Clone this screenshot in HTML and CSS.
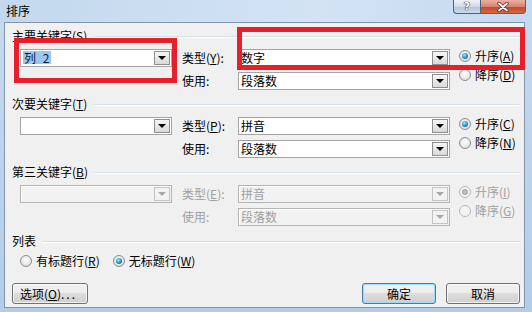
FILE: index.html
```html
<!DOCTYPE html>
<html lang="zh-CN">
<head>
    <meta charset="UTF-8">
    <title>排序</title>
<link rel="stylesheet" href="styles.css">
</head>
<body>

    <div class="window">
        <div class="titlebar">
            <span class="title">排序</span>
            <div class="capBtns">
                <span class="cap help">?</span>
                <span class="cap close">
                    <svg width="14" height="10" viewBox="0 0 14 10">
                        <path d="M3 1.5 L11 8.5 M11 1.5 L3 8.5" stroke="#5a2a22" stroke-width="3.4" stroke-linecap="round"/>
                        <path d="M3 1.5 L11 8.5 M11 1.5 L3 8.5" stroke="#fff" stroke-width="1.8" stroke-linecap="round"/>
                    </svg>
                </span>
            </div>
        </div>

        <div class="client">
            <div class="group first">
                <div class="groupHead"><span>主要关键字(<u>S</u>)</span></div>
                <div class="keys">
                    <div class="combo key"><span class="val"><span class="sel">列 2</span></span><span class="drop"></span></div>
                    <span class="lbl type">类型(<u>Y</u>):</span>
                    <div class="combo kind"><span class="val">数字</span><span class="drop"></span></div>
                    <div class="orders">
                        <span class="radio on"><i></i>升序(<u>A</u>)</span>
                        <span class="radio"><i></i>降序(<u>D</u>)</span>
                    </div>
                    <span class="lbl use">使用:</span>
                    <div class="combo field"><span class="val">段落数</span><span class="drop"></span></div>
                </div>
            </div>

            <div class="group">
                <div class="groupHead"><span>次要关键字(<u>T</u>)</span></div>
                <div class="keys">
                    <div class="combo key"><span class="val"></span><span class="drop"></span></div>
                    <span class="lbl type">类型(<u>P</u>):</span>
                    <div class="combo kind"><span class="val">拼音</span><span class="drop"></span></div>
                    <div class="orders">
                        <span class="radio on"><i></i>升序(<u>C</u>)</span>
                        <span class="radio"><i></i>降序(<u>N</u>)</span>
                    </div>
                    <span class="lbl use">使用:</span>
                    <div class="combo field"><span class="val">段落数</span><span class="drop"></span></div>
                </div>
            </div>

            <div class="group">
                <div class="groupHead"><span>第三关键字(<u>B</u>)</span></div>
                <div class="keys off">
                    <div class="combo key"><span class="val"></span><span class="drop"></span></div>
                    <span class="lbl type">类型(<u>E</u>):</span>
                    <div class="combo kind"><span class="val">拼音</span><span class="drop"></span></div>
                    <div class="orders">
                        <span class="radio on"><i></i>升序(<u>I</u>)</span>
                        <span class="radio"><i></i>降序(<u>G</u>)</span>
                    </div>
                    <span class="lbl use">使用:</span>
                    <div class="combo field"><span class="val">段落数</span><span class="drop"></span></div>
                </div>
            </div>

            <div class="group list">
                <div class="groupHead"><span>列表</span></div>
                <div class="listRow">
                    <span class="radio"><i></i>有标题行(<u>R</u>)</span>
                    <span class="radio on"><i></i>无标题行(<u>W</u>)</span>
                </div>
            </div>

            <div class="btnRow">
                <span class="btn opts">选项(<u>O</u>)<span class="dots">...</span></span>
                <span class="btn ok">确定</span>
                <span class="btn">取消</span>
            </div>
        </div>

        <div class="mark mark1"></div>
        <div class="mark mark2"></div>
    </div>

</body>
</html>
```

FILE: styles.css
```css
body{
    margin: 0;
    font-family: "Noto Sans CJK SC", "Noto Sans", sans-serif;
    font-size: 12px;
    color: #000;
}
.window{
    position: relative;
    width: 532px;
    height: 312px;
    display: flex;
    flex-direction: column;
    overflow: hidden;
    background: linear-gradient(#c6daef, #b3cce7);
}
.titlebar{
    flex: none;
    height: 22px;
    display: flex;
    align-items: flex-start;
    background: linear-gradient(90deg, #c3d8ee, #d3e3f4 60%, #c4d9ef);
}
.title{
    padding: 4px 0 0 6px;
    line-height: 14px;
}
.capBtns{
    margin-left: auto;
    margin-right: 6px;
    display: flex;
}
.cap{
    height: 14px;
    box-sizing: border-box;
    border: 1px solid #50627a;
    border-top: none;
    display: flex;
    align-items: center;
    justify-content: center;
}
.help{
    width: 27px;
    border-right: none;
    border-radius: 0 0 0 4px;
    background: linear-gradient(#eef3f9, #cfdbe8 50%, #b3c4d8 51%, #cbdbec);
    color: #fff;
    font-family: "DejaVu Sans", sans-serif;
    font-weight: bold;
    font-size: 11px;
    line-height: 12px;
    text-shadow: 0 0 1px #2d3d52, 0 0 1px #2d3d52, 0 0 1px #2d3d52;
}
.close{
    width: 46px;
    border-radius: 0 0 4px 0;
    background: linear-gradient(#eab0a3, #d88470 50%, #c5442f 51%, #d5683f);
}
.client{
    flex: 1;
    margin: 0 7px 4px 4px;
    padding: 0 4px 0 7px;
    background: #f0f0f0;
    border: 1px solid #8196ad;
    display: flex;
    flex-direction: column;
}
.group{
    margin-top: 7px;
}
.group.first{
    margin-top: 6px;
}
.group.list{
    margin-top: 8px;
}
.groupHead{
    height: 14px;
    display: flex;
    align-items: center;
    line-height: 14px;
}
.groupHead::after{
    content: "";
    flex: 1;
    height: 1px;
    margin-left: 6px;
    background: #d5dfe5;
    box-shadow: 0 1px #fff;
}
.keys{
    margin-top: 6px;
    padding-left: 8px;
    display: grid;
    grid-template-columns: 152px 66px 212px 1fr;
    grid-template-rows: 18px 18px;
    row-gap: 5px;
}
.key{
    grid-column: 1;
    grid-row: 1;
}
.type{
    grid-column: 2;
    grid-row: 1;
}
.kind{
    grid-column: 3;
    grid-row: 1;
}
.use{
    grid-column: 2;
    grid-row: 2;
}
.field{
    grid-column: 3;
    grid-row: 2;
}
.orders{
    grid-column: 4;
    grid-row: 1 / 3;
    padding-left: 9px;
    display: flex;
    flex-direction: column;
    gap: 5px;
}
.lbl{
    padding-left: 10px;
    display: flex;
    align-items: center;
    line-height: 14px;
}
.combo{
    height: 18px;
    box-sizing: border-box;
    border: 1px solid #a4a4a4;
    background: #fff;
    display: flex;
    align-items: center;
    padding-left: 2px;
}
.combo .val{
    flex: 1;
    line-height: 14px;
    white-space: nowrap;
}
.sel{
    display: inline-block;
    padding: 0 2px 0 1px;
    line-height: 13px;
    word-spacing: 4px;
    background: #9cc8f0;
    color: #0a1a40;
}
.drop{
    align-self: stretch;
    width: 16px;
    margin: 1px 1px 1px 0;
    box-sizing: border-box;
    border: 1px solid #8f8f8f;
    background: linear-gradient(#f6f6f6, #d9d9d9);
    display: flex;
    align-items: center;
    justify-content: center;
}
.drop::before{
    content: "";
    border-left: 4px solid transparent;
    border-right: 4px solid transparent;
    border-top: 4px solid #000;
}
.radio{
    height: 14px;
    display: flex;
    align-items: center;
    line-height: 14px;
    white-space: nowrap;
}
.radio i{
    position: relative;
    width: 12px;
    height: 12px;
    box-sizing: border-box;
    margin-right: 4px;
    border-radius: 50%;
    border: 1px solid #8c8e90;
    background: radial-gradient(circle at 50% 40%, #fff, #e6e6e6 60%, #cfcfcf);
}
.radio.on i::after{
    content: "";
    position: absolute;
    left: 2px;
    top: 2px;
    width: 6px;
    height: 6px;
    border-radius: 50%;
    background: radial-gradient(circle at 40% 35%, #a6e6fb, #1f8bc9 55%, #0b4f86);
}
.off .lbl,
.off .radio,
.off .combo .val{
    color: #a0a0a0;
}
.off .combo{
    border-color: #b4b4b4;
    background: #f2f2f2;
    box-shadow: inset 1px 1px #fff;
}
.off .drop{
    border-color: #c4c4c4;
    background: #f2f2f2;
}
.off .drop::before{
    border-top-color: #a8a8a8;
}
.off .radio i{
    border-color: #b8b8b8;
    background: #f4f4f4;
}
.off .radio.on i::after{
    background: radial-gradient(circle, #c8c8c8, #9c9c9c);
}
.listRow{
    margin-top: 6px;
    padding-left: 8px;
    display: flex;
}
.listRow .radio:first-child{
    margin-right: 13px;
}
.btnRow{
    margin-top: 15px;
    display: flex;
    gap: 10px;
}
.btn{
    width: 74px;
    height: 21px;
    box-sizing: border-box;
    border: 1px solid #707070;
    border-radius: 3px;
    background: linear-gradient(#f2f2f2, #ebebeb 49%, #dddddd 50%, #cfcfcf);
    box-shadow: inset 0 0 0 1px rgba(255, 255, 255, 0.7);
    text-align: center;
    line-height: 19px;
}
.opts{
    width: 76px;
    margin-right: auto;
    text-align: left;
    padding-left: 7px;
}
.dots{
    letter-spacing: 2px;
}
.ok{
    border-color: #3c7fb1;
    box-shadow: inset 0 0 0 1px #9ddcf8;
}
.mark{
    position: absolute;
    box-sizing: border-box;
    border: 5px solid #e5202a;
}
.mark1{
    left: 14px;
    top: 38px;
    width: 163px;
    height: 45px;
}
.mark2{
    left: 237px;
    top: 27px;
    width: 288px;
    height: 43px;
}
```
